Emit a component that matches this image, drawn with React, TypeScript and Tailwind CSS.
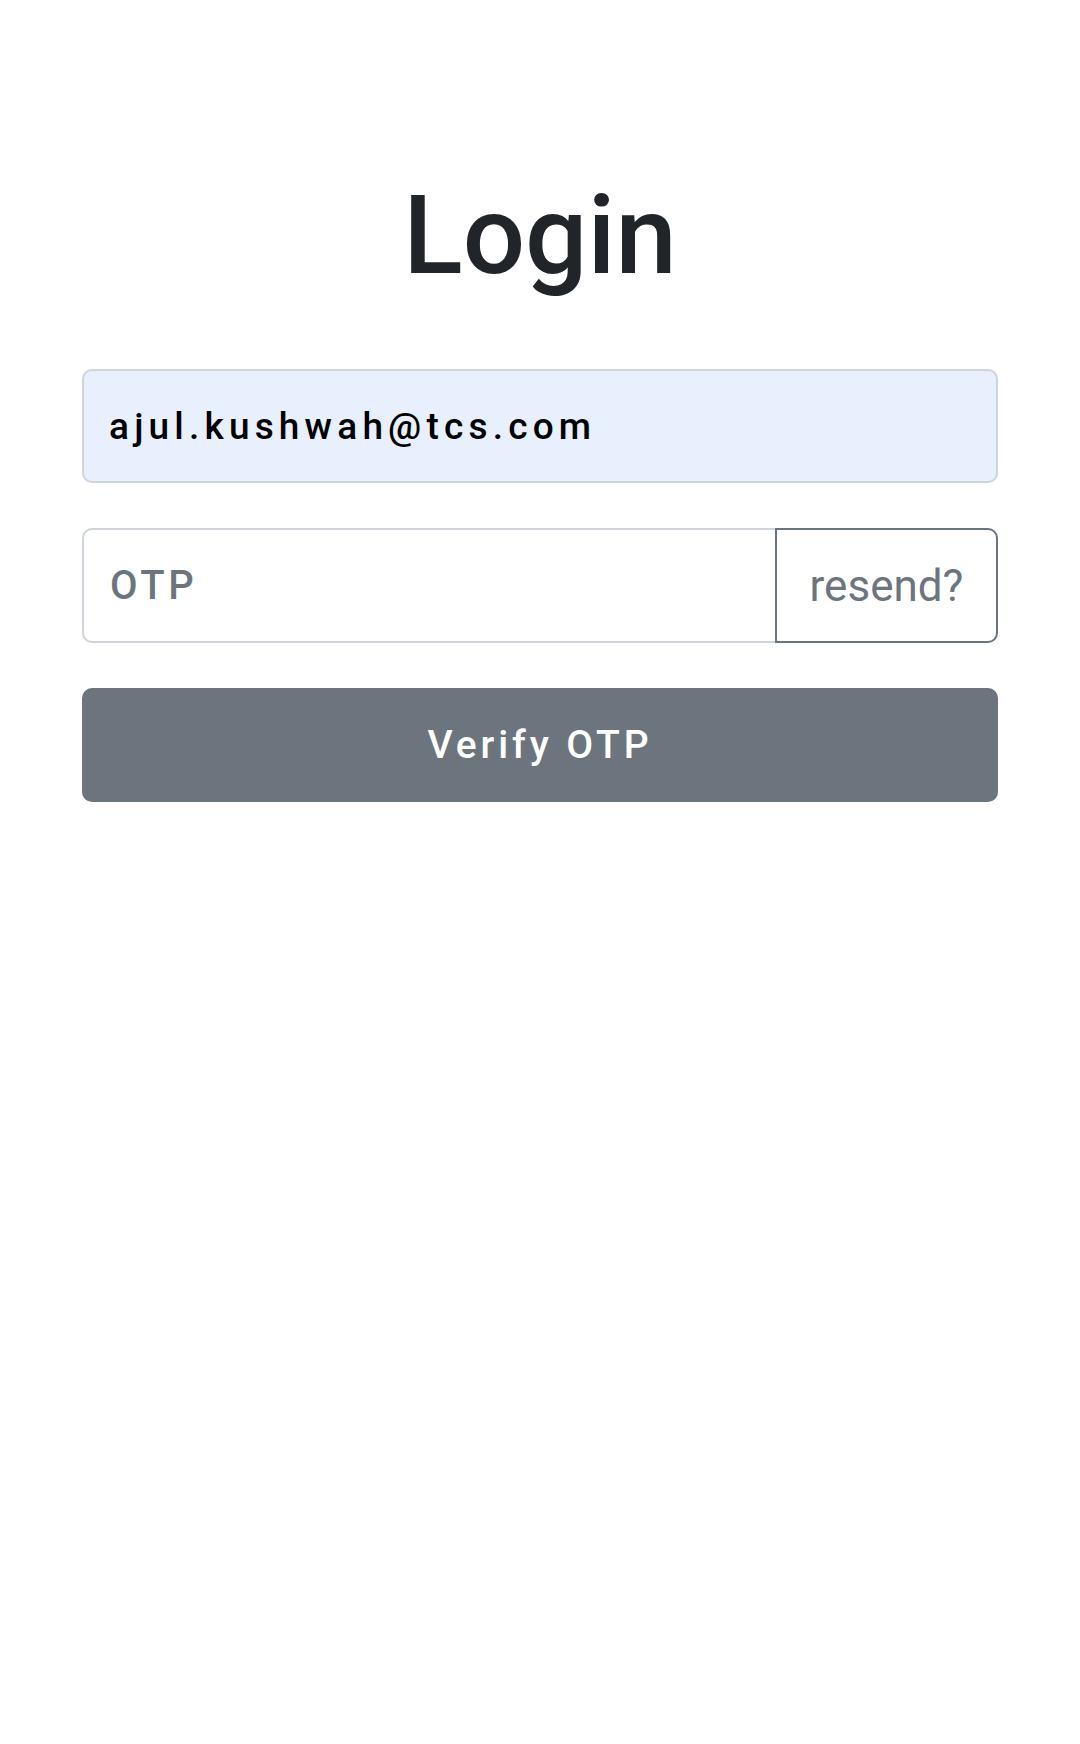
export default function App() {
  return (
    <div className="min-h-[1744px] bg-white px-[82px] pt-[170px] font-['Roboto',sans-serif]">
      <h1 className="text-center text-[110px] font-medium leading-[1.2] text-[#212529]">
        Login
      </h1>

      <div className="mt-[67px] flex flex-col gap-[45px]">
        {/* EMAIL */}
        <input
          type="email"
          defaultValue="ajul.kushwah@tcs.com"
          className="h-[114px] w-full rounded-[10px] border-2 border-[#ced4da] bg-[#e8f0fe] px-[25px] text-[37px] font-medium tracking-[0.14em] text-black outline-none"
        />

        {/* OTP */}
        <div className="flex h-[115px] w-full">
          <input
            type="text"
            placeholder="OTP"
            className="h-full min-w-0 flex-1 rounded-l-[10px] border-2 border-r-0 border-[#ced4da] bg-white px-[26px] text-[40px] font-medium tracking-[0.09em] text-[#212529] outline-none placeholder:text-[#6c757d]"
          />
          <button className="h-full w-[223px] rounded-r-[10px] border-2 border-[#6c757d] bg-white text-[44px] text-[#6c757d]">
            resend?
          </button>
        </div>

        {/* VERIFY */}
        <button className="h-[114px] w-full rounded-[10px] bg-[#6c757d] text-[39px] font-medium tracking-[0.1em] text-white">
          Verify OTP
        </button>
      </div>
    </div>
  )
}
